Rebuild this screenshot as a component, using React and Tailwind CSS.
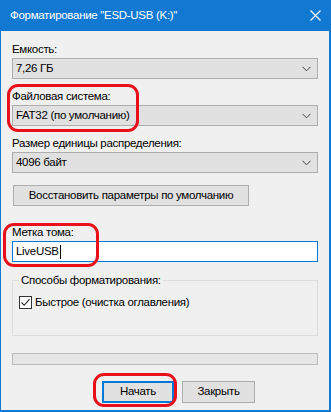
import React from "react";

const font = { fontFamily: "'Liberation Sans', Arial, sans-serif" };

const Chevron = () => (
	<svg width="9" height="6" viewBox="0 0 9 6" fill="none">
		<path d="M0.5 0.8 L4.5 4.8 L8.5 0.8" stroke="#404040" strokeWidth="1" />
	</svg>
);

const Combo = ({ value }) => (
	<div className="h-[21px] border border-[#adadad] bg-[#e1e1e1] flex items-center justify-between pl-[3px] pr-[6px]">
		<span className="leading-none">{value}</span>
		<Chevron />
	</div>
);

const Label = ({ children, className = "" }) => (
	<div className={"h-[16px] leading-[16px] mb-[1px] " + className}>{children}</div>
);

const Ring = ({ className }) => (
	<div className={"absolute border-[3px] border-[#e8101a] rounded-[11px] pointer-events-none " + className} />
);

export default function App() {
	return (
		<div
			className="relative w-[331px] h-[412px] bg-[#1279d3] flex flex-col text-[11.5px] tracking-[-0.3px] text-black whitespace-nowrap"
			style={font}
		>
			{/* title bar */}
			<div className="h-[31px] flex items-center justify-between pl-[10px] pr-[10px] text-white">
				<span>Форматирование "ESD-USB (K:)"</span>
				<svg width="11" height="11" viewBox="0 0 11 11">
					<path d="M0.5 0.5 L10.5 10.5 M10.5 0.5 L0.5 10.5" stroke="white" strokeWidth="1.2" />
				</svg>
			</div>

			{/* body */}
			<div className="flex-1 ml-[1px] mr-[2px] mb-[2px] bg-[#f0f0f0] px-[11px] pt-[10px] flex flex-col">
				<Label>Емкость:</Label>
				<Combo value="7,26 ГБ" />

				<Label className="mt-[9px]">Файловая система:</Label>
				<Combo value="FAT32 (по умолчанию)" />

				<Label className="mt-[9px]">Размер единицы распределения:</Label>
				<Combo value="4096 байт" />

				<button className="mt-[12px] ml-[1px] w-[236px] h-[21px] border border-[#adadad] bg-[#e1e1e1] flex items-center justify-center">
					Восстановить параметры по умолчанию
				</button>

				<Label className="mt-[18px]">Метка тома:</Label>
				<div className="h-[21px] border border-[#0078d7] bg-white flex items-center pl-[3px]">
					<span>LiveUSB</span>
					<span className="w-[1px] h-[14px] bg-black ml-[1px]" />
				</div>

				{/* group box */}
				<div className="relative mt-[18px] h-[56px] border border-[#dcdcdc]">
					<div className="absolute -top-[9px] left-[6px] px-[2px] bg-[#f0f0f0] leading-[16px]">
						Способы форматирования:
					</div>
					<div className="flex items-center mt-[13px] ml-[6px] gap-[3px]">
						<div className="w-[13px] h-[13px] border border-[#333333] bg-white flex items-center justify-center">
							<svg width="11" height="11" viewBox="0 0 11 11" fill="none">
								<path d="M1.5 5.5 L4.2 8.3 L9.5 2.2" stroke="#222" strokeWidth="1.1" />
							</svg>
						</div>
						<span className="leading-[16px]">Быстрое (очистка оглавления)</span>
					</div>
				</div>

				{/* progress */}
				<div className="mt-[17px] h-[12px] border border-[#bcbcbc] bg-[#e6e6e6]" />

				{/* buttons */}
				<div className="mt-[16px] flex gap-[8px] pl-[90px]">
					<button className="w-[72px] h-[22px] border-2 border-[#0078d7] bg-[#e1e1e1] flex items-center justify-center">
						Начать
					</button>
					<button className="w-[73px] h-[22px] border border-[#adadad] bg-[#e1e1e1] flex items-center justify-center">
						Закрыть
					</button>
				</div>
			</div>

			{/* red annotation rings */}
			<Ring className="left-[7px] top-[84px] w-[132px] h-[48px]" />
			<Ring className="left-[3px] top-[223px] w-[96px] h-[44px]" />
			<Ring className="left-[93px] top-[373px] w-[84px] h-[34px]" />
		</div>
	);
}
